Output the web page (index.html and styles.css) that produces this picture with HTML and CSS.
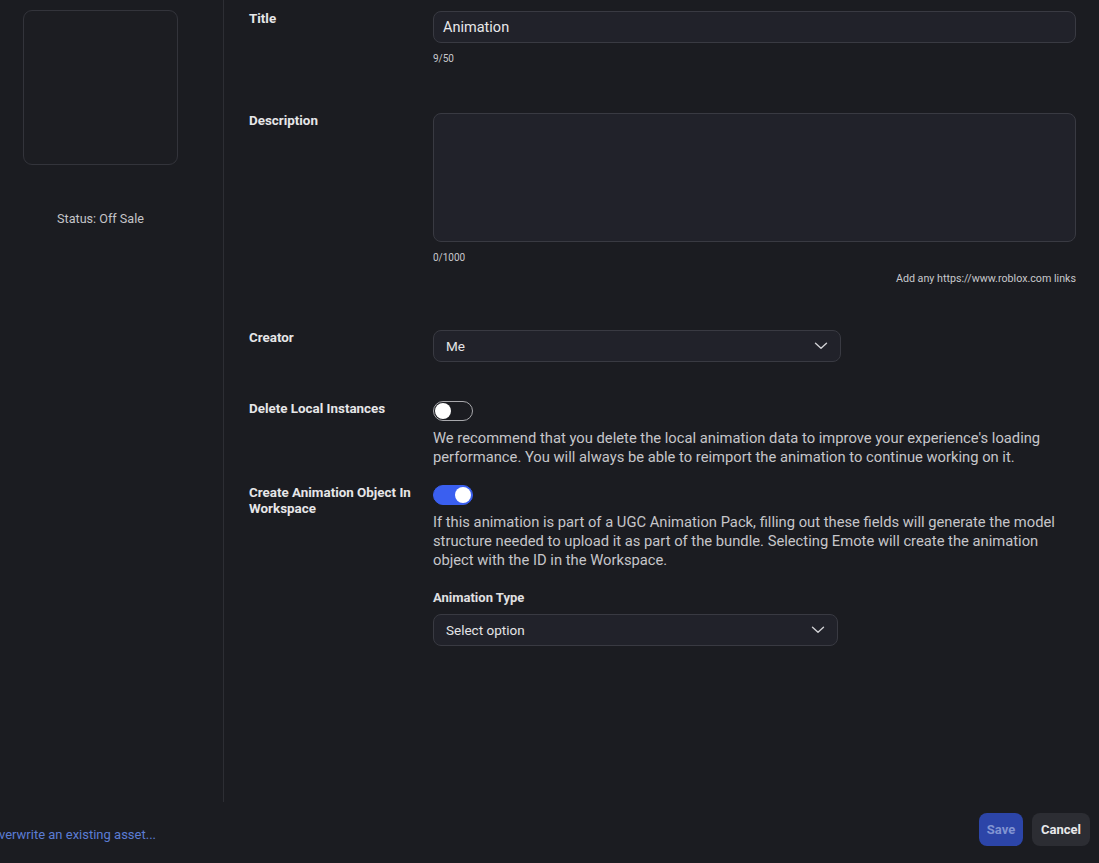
FILE: index.html
```html
<!DOCTYPE html>
<html lang="en">
<head>
  <meta charset="UTF-8" />
  <meta name="viewport" content="width=device-width, initial-scale=1" />
  <title>Asset Configuration</title>
  <link rel="stylesheet" href="styles.css">
</head>
<body>
  <div class="page">
    <div class="content">
      <aside>
        <div class="thumb"></div>
        <div class="status">Status: Off Sale</div>
      </aside>

      <main>
        <div class="row row-title">
          <div class="label">Title</div>
          <div class="field">
            <div class="input">Animation</div>
            <div class="hint">9/50</div>
          </div>
        </div>

        <div class="row row-desc">
          <div class="label">Description</div>
          <div class="field">
            <div class="textarea"></div>
            <div class="hint">0/1000</div>
            <div class="hint hint-right">Add any https://www.roblox.com links</div>
          </div>
        </div>

        <div class="row row-creator">
          <div class="label">Creator</div>
          <div class="field">
            <div class="select select-creator">
              <span>Me</span>
              <svg class="chevron" width="14" height="8" viewBox="0 0 14 8"><path d="M1.5 1.2 L7 6.3 L12.5 1.2" fill="none" stroke="#d0d0d4" stroke-width="1.4" stroke-linecap="round" stroke-linejoin="round"/></svg>
            </div>
          </div>
        </div>

        <div class="row row-delete">
          <div class="label">Delete Local Instances</div>
          <div class="field">
            <div class="toggle"><div class="knob"></div></div>
            <p class="text">We recommend that you delete the local animation data to improve your experience's loading performance. You will always be able to reimport the animation to continue working on it.</p>
          </div>
        </div>

        <div class="row row-create">
          <div class="label">Create Animation Object In Workspace</div>
          <div class="field">
            <div class="toggle on"><div class="knob"></div></div>
            <p class="text">If this animation is part of a UGC Animation Pack, filling out these fields will generate the model structure needed to upload it as part of the bundle. Selecting Emote will create the animation object with the ID in the Workspace.</p>
            <div class="sub-label">Animation Type</div>
            <div class="select select-type">
              <span>Select option</span>
              <svg class="chevron" width="14" height="8" viewBox="0 0 14 8"><path d="M1.5 1.2 L7 6.3 L12.5 1.2" fill="none" stroke="#d0d0d4" stroke-width="1.4" stroke-linecap="round" stroke-linejoin="round"/></svg>
            </div>
          </div>
        </div>
      </main>
    </div>

    <footer>
      <a class="overwrite" href="#">Overwrite an existing asset...</a>
      <div class="buttons">
        <button class="btn btn-save">Save</button>
        <button class="btn btn-cancel">Cancel</button>
      </div>
    </footer>
  </div>
</body>
</html>
```

FILE: styles.css
```css
body {
  margin: 0;
  background-color: #1b1c21;
  color: #e4e4e6;
  font-family: Roboto, "Noto Sans", sans-serif;
  overflow: hidden;
}
.page {
  display: flex;
  flex-direction: column;
  height: 863px;
  width: 1099px;
}
.content {
  display: flex;
  height: 802px;
}
aside {
  width: 224px;
  border-right: 1px solid #2d2e34;
  padding-top: 10px;
  box-sizing: border-box;
}
.thumb {
  width: 155px;
  height: 155px;
  margin-left: 23px;
  border: 1px solid #33343b;
  border-radius: 9px;
  box-sizing: border-box;
  background-color: #1c1d22;
}
.status {
  width: 155px;
  margin: 46px 0 0 23px;
  text-align: center;
  font-size: 12.6px;
  color: #c4c4c8;
}
main {
  flex: 1;
  padding: 11px 23px 0 25px;
}
.row {
  display: flex;
}
.label {
  width: 184px;
  flex-shrink: 0;
  padding-right: 10px;
  box-sizing: border-box;
  font-size: 13.4px;
  font-weight: 700;
  line-height: 16px;
  color: #e6e6e8;
}
.field {
  flex: 1;
}
.input,
.textarea,
.select {
  background-color: #21222a;
  border: 1px solid #393a42;
  border-radius: 8px;
  box-sizing: border-box;
}
.input {
  height: 32px;
  padding: 0 9px;
  font-size: 14.5px;
  line-height: 31px;
  color: #e8e8ea;
}
.textarea {
  height: 129px;
}
.hint {
  font-size: 10px;
  line-height: 12px;
  color: #c8c8cc;
  margin-top: 10px;
}
.hint-right {
  text-align: right;
  font-size: 10.7px;
  margin-top: 9px;
}
.row-desc {
  margin-top: 48px;
}
.row-creator {
  margin-top: 45px;
}
.select {
  height: 32px;
  display: flex;
  align-items: center;
  justify-content: space-between;
  padding: 0 12px 0 12px;
  font-size: 13.5px;
  color: #e4e4e6;
}
.select-creator {
  width: 408px;
}
.select-type {
  width: 405px;
}
.chevron {
  display: block;
}
.row-delete {
  margin-top: 39px;
}
.row-create {
  margin-top: 18px;
}
.toggle {
  width: 40px;
  height: 20px;
  border: 1.5px solid #a8a8ac;
  border-radius: 10px;
  box-sizing: border-box;
  display: flex;
  align-items: center;
  padding: 0 1px;
}
.toggle .knob {
  width: 16px;
  height: 16px;
  border-radius: 50%;
  background-color: #ffffff;
}
.toggle.on {
  background-color: #3a5ff0;
  border-color: #3a5ff0;
  justify-content: flex-end;
}
.text {
  margin: 8px 0 0 0;
  font-size: 14.75px;
  line-height: 19px;
  color: #c6c6ca;
}
.sub-label {
  margin-top: 20px;
  font-size: 13px;
  font-weight: 700;
  line-height: 16px;
  color: #e0e0e2;
}
.select-type {
  margin-top: 8px;
}
footer {
  flex: 1;
  display: flex;
  align-items: center;
  justify-content: space-between;
  padding: 0 9px 6px 0;
}
.overwrite {
  margin-left: -10px;
  margin-top: 10px;
  font-size: 13px;
  color: #5b7cd4;
  text-decoration: none;
}
.buttons {
  display: flex;
  gap: 9px;
}
.btn {
  height: 33px;
  border: none;
  border-radius: 8px;
  font-family: Roboto, "Noto Sans", sans-serif;
  font-size: 13px;
  font-weight: 700;
  padding: 0;
}
.btn-save {
  width: 44px;
  background-color: #2c45a8;
  color: #8194d2;
}
.btn-cancel {
  width: 58px;
  background-color: #2c2d33;
  color: #e8e8ea;
}
```
